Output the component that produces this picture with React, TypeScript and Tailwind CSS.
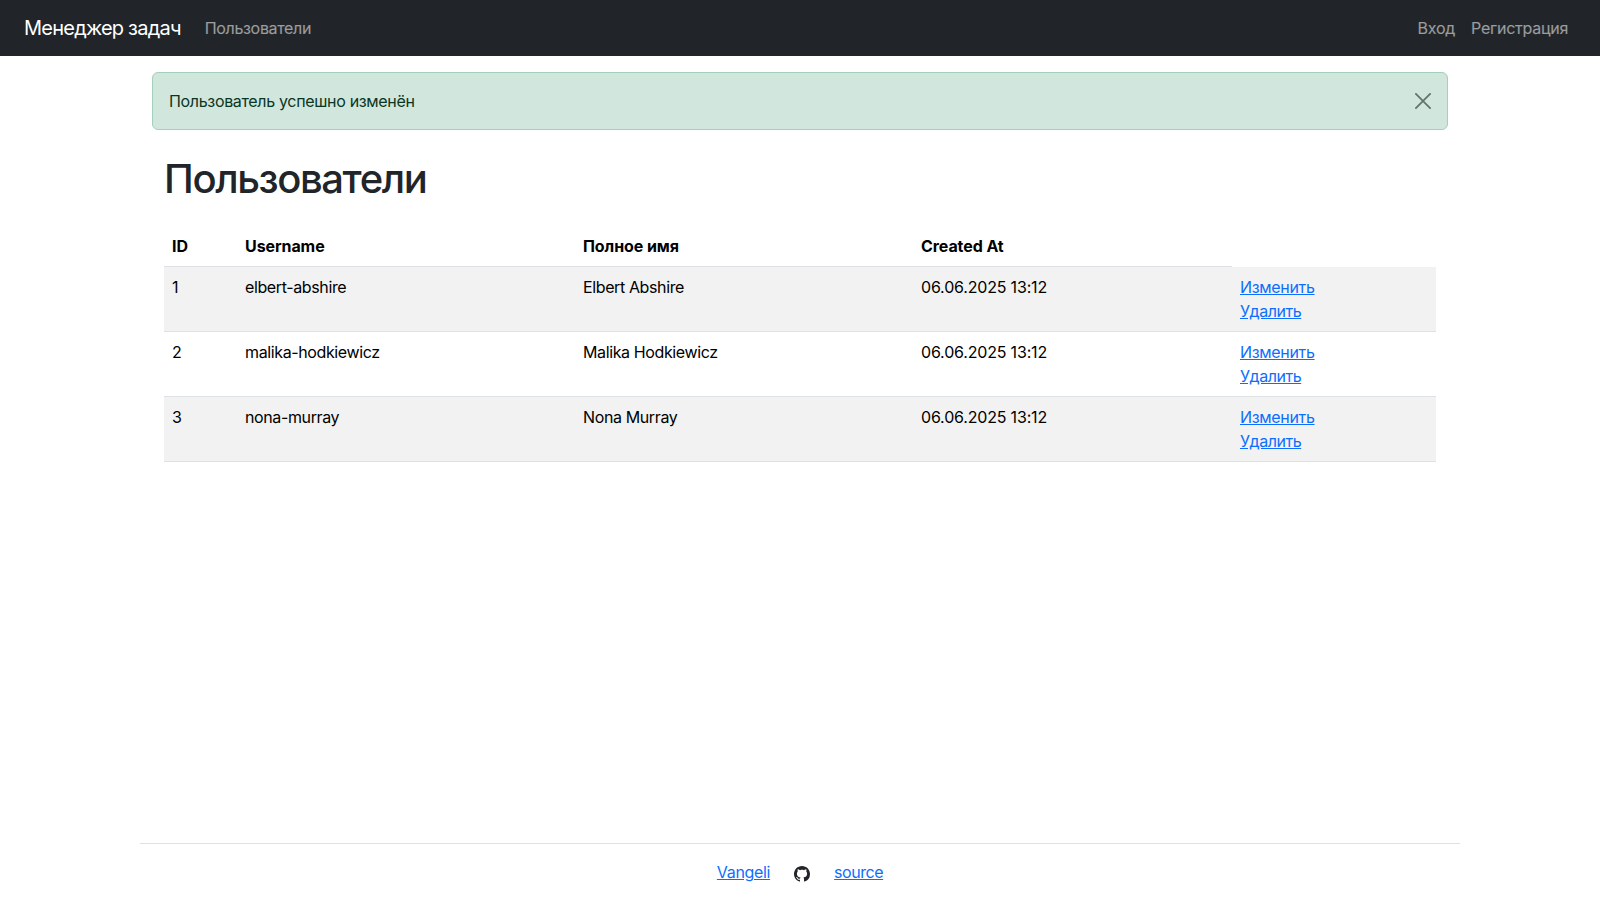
const rows = [
  { id: 1, username: "elbert-abshire", name: "Elbert Abshire" },
  { id: 2, username: "malika-hodkiewicz", name: "Malika Hodkiewicz" },
  { id: 3, username: "nona-murray", name: "Nona Murray" },
];

export default function App() {
  return (
    <div className="flex h-[900px] flex-col bg-white font-['Inter',sans-serif] text-base tracking-[-0.33px] text-[#212529]">
      <nav className="flex h-14 shrink-0 items-center bg-[#212529] px-6">
        <a className="mr-4 text-xl tracking-[-0.77px] text-white">Менеджер задач</a>
        <a className="px-2 text-white/55">Пользователи</a>
        <div className="ml-auto flex tracking-[-0.26px]">
          <a className="px-2 text-white/55">Вход</a>
          <a className="px-2 text-white/55">Регистрация</a>
        </div>
      </nav>
      <main className="mx-auto w-[1320px] grow px-3">
        <div className="mt-4 flex h-[58px] items-center justify-between rounded-md border border-[#a3cfbb] bg-[#d1e7dd] px-4 text-[#0a3622]">
          Пользователь успешно изменён
          <svg viewBox="0 0 16 16" className="size-4 opacity-50" fill="none" stroke="#000" strokeWidth="1.8" strokeLinecap="round">
            <path d="M.9.9l14.2 14.2M15.1.9L.9 15.1" />
          </svg>
        </div>
        <div className="px-3">
          <h1 className="mt-[25px] text-[40px] leading-12 font-medium tracking-[-1.4px]">Пользователи</h1>
          <table className="mt-[23px] w-full table-fixed border-collapse text-left align-top text-black">
            <colgroup>
              <col className="w-[73px]" />
              <col className="w-[338px]" />
              <col className="w-[338px]" />
              <col className="w-[319px]" />
              <col />
            </colgroup>
            <thead>
              <tr>
                {["ID", "Username", "Полное имя", "Created At"].map((h) => (
                  <th key={h} className="border-b border-[#dee2e6] p-2 font-bold tracking-[-0.08px]">{h}</th>
                ))}
              </tr>
            </thead>
            <tbody>
              {rows.map((r) => (
                <tr key={r.id} className="border-b border-[#dee2e6] align-top odd:bg-[#f2f2f2]">
                  <td className="p-2">{r.id}</td>
                  <td className="p-2 tracking-[-0.38px]">{r.username}</td>
                  <td className="p-2 tracking-[-0.38px]">{r.name}</td>
                  <td className="p-2 tracking-[-0.18px]">06.06.2025 13:12</td>
                  <td className="p-2 text-[#0d6efd]">
                    <a className="block underline">Изменить</a>
                    <a className="block tracking-[-0.46px] underline">Удалить</a>
                  </td>
                </tr>
              ))}
            </tbody>
          </table>
        </div>
      </main>
      <footer className="mx-auto flex h-[57px] w-[1320px] shrink-0 justify-center gap-6 border-t border-[#dee2e6] pt-4 text-[#0d6efd]">
        <a className="underline">Vangeli</a>
        <svg viewBox="0 0 16 16" className="mt-[6px] size-4" fill="#212529">
          <path d="M8 0C3.58 0 0 3.58 0 8c0 3.54 2.29 6.53 5.47 7.59.4.07.55-.17.55-.38 0-.19-.01-.82-.01-1.49-2.01.37-2.53-.49-2.69-.94-.09-.23-.48-.94-.82-1.13-.28-.15-.68-.52-.01-.53.63-.01 1.08.58 1.23.82.72 1.21 1.87.87 2.33.66.07-.52.28-.87.51-1.07-1.78-.2-3.64-.89-3.64-3.95 0-.87.31-1.59.82-2.15-.08-.2-.36-1.02.08-2.12 0 0 .67-.21 2.2.82.64-.18 1.32-.27 2-.27s1.36.09 2 .27c1.53-1.04 2.2-.82 2.2-.82.44 1.1.16 1.92.08 2.12.51.56.82 1.27.82 2.15 0 3.07-1.87 3.75-3.65 3.95.29.25.54.73.54 1.48 0 1.07-.01 1.93-.01 2.2 0 .21.15.46.55.38A8.01 8.01 0 0 0 16 8c0-4.42-3.58-8-8-8" />
        </svg>
        <a className="tracking-[-0.45px] underline">source</a>
      </footer>
    </div>
  );
}
